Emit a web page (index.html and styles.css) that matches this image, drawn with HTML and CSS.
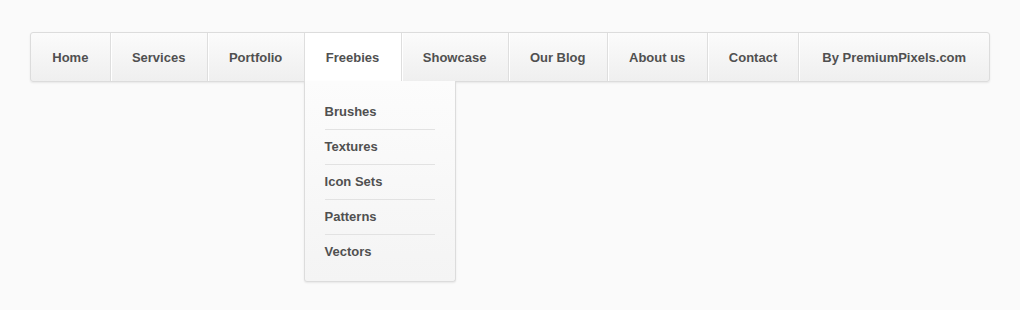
FILE: index.html
```html
<!DOCTYPE html>
<html lang="en">
<head>
    <meta charset="UTF-8">
    <title>Dropdown Menu</title>
    <link rel="stylesheet" href="styles.css">
</head>
<body>
    <nav class="menu">
        <ul class="menu-list">
            <li class="menu-item"><a href="#">Home</a></li>
            <li class="menu-item"><a href="#">Services</a></li>
            <li class="menu-item"><a href="#">Portfolio</a></li>
            <li class="menu-item active">
                <a href="#">Freebies</a>
                <ul class="submenu">
                    <li><a href="#">Brushes</a></li>
                    <li><a href="#">Textures</a></li>
                    <li><a href="#">Icon Sets</a></li>
                    <li><a href="#">Patterns</a></li>
                    <li><a href="#">Vectors</a></li>
                </ul>
            </li>
            <li class="menu-item"><a href="#">Showcase</a></li>
            <li class="menu-item"><a href="#">Our Blog</a></li>
            <li class="menu-item"><a href="#">About us</a></li>
            <li class="menu-item"><a href="#">Contact</a></li>
            <li class="menu-item"><a href="#">By PremiumPixels.com</a></li>
        </ul>
    </nav>
</body>
</html>
```

FILE: styles.css
```css
html, body {
    height: 100%;
}
body {
    margin: 0;
    padding: 32px 30px;
    box-sizing: border-box;
    min-height: 310px;
    background-color: #fafafa;
    font-family: "Liberation Sans", Arial, sans-serif;
}
.menu {
    display: flex;
}
.menu-list {
    display: flex;
    list-style: none;
    margin: 0;
    padding: 0;
    width: 958px;
    border: 1px solid #dcdcdc;
    border-radius: 3px;
    background: linear-gradient(#fbfbfb, #efefef);
    box-shadow: 0 1px 2px rgba(0,0,0,0.08);
}
.menu-item {
    position: relative;
    flex: none;
    border-left: 1px solid #dedede;
    box-shadow: inset 1px 0 0 #fff;
}
.menu-item:first-child {
    border-left: none;
    box-shadow: none;
}
.menu-item:last-child {
    flex: 1;
}
.menu-item > a {
    display: block;
    height: 48px;
    line-height: 50px;
    padding: 0 21.25px;
    font-size: 13px;
    font-weight: bold;
    color: #505050;
    text-align: center;
    white-space: nowrap;
    text-decoration: none;
}
.menu-item.active {
    background: #fff;
}
.submenu {
    position: absolute;
    z-index: 10;
    top: 48px;
    left: -1px;
    width: 110px;
    list-style: none;
    margin: 0;
    padding: 14px 20px 12px;
    background: linear-gradient(#fcfcfc, #f4f4f4);
    border: 1px solid #dcdcdc;
    border-top: none;
    border-radius: 0 0 3px 3px;
    box-shadow: 0 1px 2px rgba(0,0,0,0.08);
}
.submenu li {
    border-bottom: 1px solid #e2e2e2;
}
.submenu li:last-child {
    border-bottom: none;
}
.submenu a {
    display: block;
    height: 34px;
    line-height: 34px;
    font-size: 13px;
    font-weight: bold;
    color: #505050;
    white-space: nowrap;
    text-decoration: none;
}
```
